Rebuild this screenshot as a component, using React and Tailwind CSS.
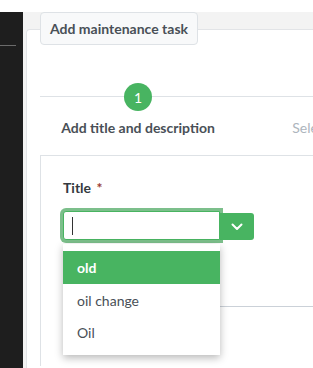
import React from 'react';

const options = ['old', 'oil change', 'Oil'];

const App = () => {
  return (
    <div className="w-[313px] h-[368px] overflow-hidden bg-white flex flex-col font-['Lato',sans-serif] text-[#495057]">
      <div className="h-3 shrink-0 bg-white" />
      <div className="flex flex-1 min-h-0">
        {/* sidebar */}
        <aside className="w-[23px] shrink-0 bg-[#1e1e1e] pt-[33px]">
          <div className="h-px w-4 bg-[#6b6b6b]" />
        </aside>

        <main className="flex-1 min-w-0 bg-[#f3f3f3] pl-[3px] flex flex-col">
          <div className="relative z-10 ml-[14px] self-start h-[33px] px-[9px] flex items-center bg-[#f8f9fa] border border-[#dee2e6] rounded-[4px] text-[14px] font-bold text-[#495057] whitespace-nowrap">
            Add maintenance task
          </div>

          <div className="-mt-4 flex-1 min-h-0 bg-white border-l border-t border-[#e2e4e7] rounded-tl-[4px] pl-[13px] pt-[53px]">
            {/* stepper */}
            <div className="relative flex">
              <div className="absolute left-0 right-0 top-[13px] h-px bg-[#dee2e6]" />
              <div className="relative w-[196px] shrink-0 flex flex-col items-center">
                <div className="w-7 h-7 rounded-full bg-[#48b461] text-white text-[14px] flex items-center justify-center">1</div>
                <span className="mt-[7px] text-[14px] leading-5 font-bold text-[#495057] whitespace-nowrap">Add title and description</span>
              </div>
              <div className="relative w-[196px] shrink-0 flex flex-col items-center">
                <div className="w-7 h-7 rounded-full bg-[#e9ecef]" />
                <span className="mt-[7px] text-[14px] leading-5 text-[#adb5bd] whitespace-nowrap">Select vehicle</span>
              </div>
            </div>

            {/* card */}
            <div className="mt-[17px] border-l border-t border-[#dee2e6] pl-[22px] pt-[22px]">
              <label className="block text-[14px] leading-5 font-bold text-[#343a40]">
                Title <span className="ml-[2px] text-[#9b3a32]">*</span>
              </label>

              <div className="relative mt-[13px] flex items-start">
                <div className="relative w-[157px] h-[29px] border border-[#48b461] rounded-l-[3px] bg-white shadow-[0_0_0_3px_rgba(80,170,100,0.75)] flex items-center pl-[8px]">
                  <div className="w-px h-[18px] bg-[#333]" />
                </div>
                <button className="relative mt-[2px] w-[34px] h-[27px] bg-[#48b461] rounded-r-[3px] flex items-center justify-center">
                  <svg width="12" height="8" viewBox="0 0 12 8" fill="none" stroke="white" strokeWidth="2" strokeLinecap="round" strokeLinejoin="round">
                    <path d="M1.5 1.5 6 6l4.5-4.5" />
                  </svg>
                </button>

                {/* autocomplete menu */}
                <ul className="absolute z-20 left-0 top-[33px] w-[157px] bg-white py-[7px] shadow-[0_3px_8px_rgba(0,0,0,0.28)] text-[14px]">
                  {options.map((o, i) => (
                    <li
                      key={o}
                      className={
                        i === 0
                          ? 'h-[33px] px-[14px] flex items-center bg-[#48b461] text-white font-bold'
                          : 'h-[32px] px-[14px] flex items-center text-[#495057]'
                      }
                    >
                      {o}
                    </li>
                  ))}
                </ul>
              </div>

              <div className="mt-[66px] border-t border-[#cbd1d8] h-[60px]" />
            </div>
          </div>
        </main>
      </div>
    </div>
  );
};

export default App;
